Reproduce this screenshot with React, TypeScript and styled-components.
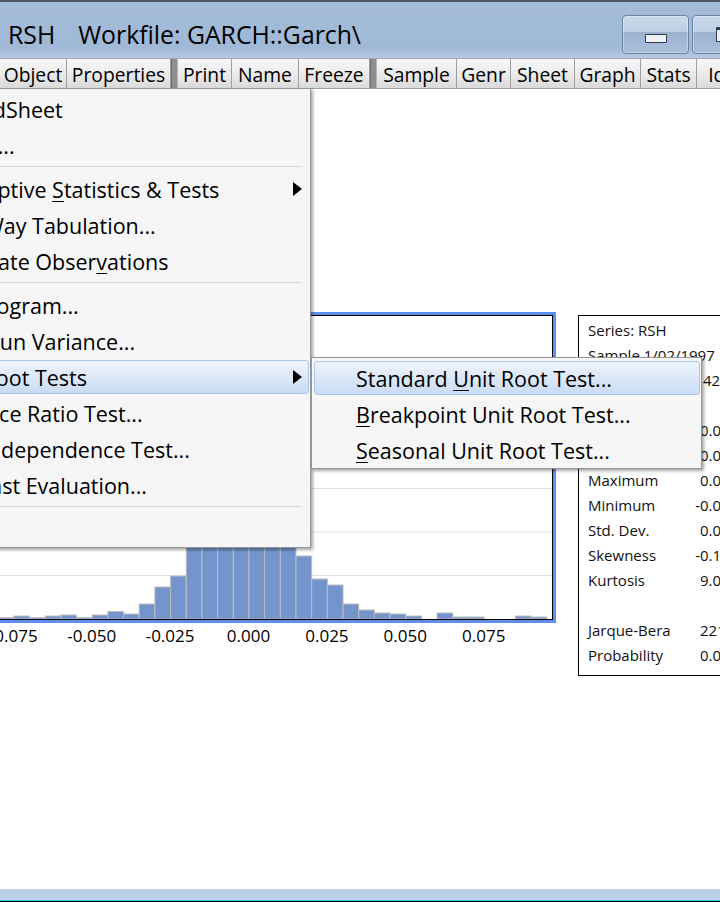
import React from "react";
import styled, { createGlobalStyle } from "styled-components";

const GlobalStyle = createGlobalStyle`
  html, body { margin: 0; padding: 0; overflow: hidden; background: #ffffff; }
  #root { width: 720px; height: 902px; overflow: hidden; position: relative; }
  *, *::before, *::after { box-sizing: border-box; }
`;

const Window = styled.div`
  position: relative;
  width: 880px;
  height: 902px;
  display: flex;
  flex-direction: column;
  font-family: "Open Sans", "Noto Sans", sans-serif;
  color: #000;
  border-bottom: 1px solid #000;
`;

const TitleBar = styled.div`
  height: 58px;
  flex: none;
  display: flex;
  align-items: flex-start;
  padding: 0 10px 0 8px;
  border-top: 2px solid #4e5764;
  background: linear-gradient(to bottom, #a4bcd8 0%, #a0b9d6 82%, #b4cae3 100%);
`;

const TitleText = styled.div`
  display: flex;
  gap: 23px;
  padding-top: 16px;
  font-size: 24.8px;
  line-height: 33px;
  white-space: nowrap;
  color: #000;
`;

const WindowButtons = styled.div`
  margin-left: auto;
  margin-top: 13px;
  display: flex;
  gap: 3px;
`;

const CaptionButton = styled.div<{ $w: number; $pad: number }>`
  width: ${(p) => p.$w}px;
  height: 39px;
  border: 1px solid #6b83a5;
  border-radius: 4px;
  background: linear-gradient(to bottom, #c9d9eb 0%, #bdd0e6 42%, #9bb1ce 43%, #a9bfda 100%);
  box-shadow: inset 0 0 0 1px rgba(255, 255, 255, 0.35);
  display: flex;
  justify-content: center;
  align-items: flex-start;
  padding-top: ${(p) => p.$pad}px;
`;

const MinGlyph = styled.div`
  width: 22px;
  height: 9px;
  background: #eef2f7;
  border: 1px solid #2f3b4b;
  border-radius: 1px;
`;

const MaxGlyph = styled.div`
  width: 20px;
  height: 15px;
  background: #eef2f7;
  border: 1px solid #2f3b4b;
  border-top-width: 3px;
  border-radius: 1px;
`;

const Toolbar = styled.div`
  height: 31px;
  flex: none;
  display: flex;
  border-top: 1px solid #a8a8a8;
  border-bottom: 1px solid #9c9c9c;
  background: linear-gradient(#f7f7f7, #d9d9d9);
`;

const ToolButton = styled.div<{ $w: number }>`
  width: ${(p) => p.$w}px;
  flex: none;
  display: flex;
  align-items: center;
  justify-content: center;
  padding-top: 1px;
  font-size: 19.3px;
  white-space: nowrap;
  border-right: 1px solid #9e9e9e;
  background: linear-gradient(to bottom, #f8f8f8 0%, #ececec 50%, #dadada 100%);
`;

const ToolSep = styled.div`
  width: 7px;
  flex: none;
  background: #8e8e8e;
  border-left: 1px solid #6f6f6f;
  border-right: 1px solid #b5b5b5;
`;

const Content = styled.div`
  flex: 1;
  background: #ffffff;
  display: flex;
  align-items: flex-start;
  padding-top: 223px;
`;

const BottomFrame = styled.div`
  height: 12px;
  flex: none;
  background: #bbd1ea;
  border-bottom: 1px solid #3fc6de;
`;

const ChartBlock = styled.div`
  margin-left: -100px;
  flex: none;
  display: flex;
  flex-direction: column;
`;

const PlotFrame = styled.div`
  width: 656px;
  height: 311px;
  border: 3px solid #5c8fee;
`;

const PlotInner = styled.div`
  width: 100%;
  height: 100%;
  border: 1px solid #000;
  background: #fff;
  display: flex;
`;

const StatsBox = styled.div`
  margin-left: 22px;
  margin-top: 3px;
  width: 220px;
  flex: none;
  border: 1px solid #000;
  padding: 1px 0 8px 9px;
  font-size: 15px;
  color: #111;
`;

const StatRow = styled.div`
  display: flex;
  height: 25px;
  align-items: center;
  white-space: nowrap;
`;

const StatLabel = styled.span`
  width: 100px;
  flex: none;
`;

const StatValue = styled.span<{ $left?: boolean }>`
  width: 76px;
  flex: none;
  text-align: ${(p) => (p.$left ? "left" : "right")};
  padding-left: ${(p) => (p.$left ? 15 : 0)}px;
`;

const Menu = styled.div<{ $left: number; $top: number; $width: number; $z: number }>`
  position: absolute;
  left: ${(p) => p.$left}px;
  top: ${(p) => p.$top}px;
  width: ${(p) => p.$width}px;
  z-index: ${(p) => p.$z};
  display: flex;
  flex-direction: column;
  padding: 2px 0 0;
  background: #f6f6f6;
  border: 1px solid #979797;
  box-shadow: 2px 2px 3px rgba(0, 0, 0, 0.35);
  font-size: 21.5px;
  color: #000;
`;

const MenuItem = styled.div<{ $active?: boolean }>`
  height: 34px;
  flex: none;
  margin: 1px 1px 1px 2px;
  padding: 0 6px 0 41px;
  display: flex;
  align-items: center;
  white-space: nowrap;
  border: 1px solid ${(p) => (p.$active ? "#a9c8ef" : "transparent")};
  border-radius: 3px;
  background: ${(p) =>
    p.$active ? "linear-gradient(to bottom, #eef4fd 0%, #dce8f8 50%, #c9dbf4 100%)" : "transparent"};
`;

const MenuSep = styled.div`
  height: 1px;
  flex: none;
  margin: 3px 9px 4px 2px;
  background: #d5d5d5;
`;

const SubArrow = styled.span`
  margin-left: auto;
  width: 0;
  height: 0;
  border-top: 7px solid transparent;
  border-bottom: 7px solid transparent;
  border-left: 9px solid #000;
`;

const Acc = styled.span`
  text-decoration: underline;
  text-underline-offset: 3px;
  text-decoration-thickness: 1px;
`;

const BIN = 15.68;
const HEIGHTS = [
  0, 1.5, 0, 1.5, 1.5, 2.5,
  1.5, 3, 1.5, 3, 4, 1.5, 4, 7.5, 5, 15, 32, 43, 72, 130, 190, 255, 240, 175, 110,
  63, 40, 34, 15, 9, 6, 5, 3, 0, 6, 2, 2, 0, 0, 3, 2,
];
const GRID = [259.5, 216, 172.5, 129, 85.5, 42];
const LABELS = [
  { t: "-0.100", x: -65.1 },
  { t: "-0.075", x: 13.3 },
  { t: "-0.050", x: 91.7 },
  { t: "-0.025", x: 170.1 },
  { t: "0.000", x: 248.5 },
  { t: "0.025", x: 326.9 },
  { t: "0.050", x: 405.3 },
  { t: "0.075", x: 483.7 },
];

const Histogram = () => (
  <svg width={648} height={303} viewBox="0 0 648 303">
    {GRID.map((y) => (
      <line key={y} x1={0} x2={648} y1={y} y2={y} stroke="#e2e2e2" strokeWidth={1} />
    ))}
    {HEIGHTS.map((h, i) =>
      h > 0 ? (
        <rect
          key={i}
          x={i * BIN}
          y={303 - h}
          width={BIN}
          height={h}
          fill="#7394cc"
          stroke="#bdbdbd"
          strokeWidth={1}
        />
      ) : null
    )}
  </svg>
);

const AxisLabels = () => (
  <svg width={656} height={28} viewBox="0 0 656 28">
    {LABELS.map((l) => (
      <text
        key={l.t}
        x={l.x + 100}
        y={18.5}
        textAnchor="middle"
        fontFamily='"Open Sans", "Noto Sans", sans-serif'
        fontSize={17}
        fill="#000"
      >
        {l.t}
      </text>
    ))}
  </svg>
);

const TOOLS: Array<{ t?: string; w: number; sep?: boolean }> = [
  { t: "Object", w: 67 },
  { t: "Properties", w: 104 },
  { sep: true, w: 7 },
  { t: "Print", w: 54 },
  { t: "Name", w: 67 },
  { t: "Freeze", w: 71 },
  { sep: true, w: 7 },
  { t: "Sample", w: 80 },
  { t: "Genr", w: 54 },
  { t: "Sheet", w: 64 },
  { t: "Graph", w: 66 },
  { t: "Stats", w: 56 },
  { t: "Ident", w: 70 },
];

export default function App() {
  return (
    <>
      <GlobalStyle />
      <Window>
        <TitleBar>
          <TitleText>
            <span>RSH</span>
            <span>Workfile: GARCH::Garch\</span>
          </TitleText>
          <WindowButtons>
            <CaptionButton $w={67} $pad={18}>
              <MinGlyph />
            </CaptionButton>
            <CaptionButton $w={67} $pad={11}>
              <MaxGlyph />
            </CaptionButton>
            <CaptionButton $w={108} $pad={11} />
          </WindowButtons>
        </TitleBar>

        <Toolbar>
          {TOOLS.map((b, i) =>
            b.sep ? <ToolSep key={i} /> : <ToolButton key={i} $w={b.w}>{b.t}</ToolButton>
          )}
        </Toolbar>

        <Content>
          <ChartBlock>
            <PlotFrame>
              <PlotInner>
                <Histogram />
              </PlotInner>
            </PlotFrame>
            <AxisLabels />
          </ChartBlock>
          <StatsBox>
            <StatRow>Series: RSH</StatRow>
            <StatRow>Sample 1/02/1997 12/31/2012</StatRow>
            <StatRow>
              <StatLabel>Observations</StatLabel>
              <StatValue $left>4218</StatValue>
            </StatRow>
            <StatRow />
            <StatRow>
              <StatLabel>Mean</StatLabel>
              <StatValue>0.000214</StatValue>
            </StatRow>
            <StatRow>
              <StatLabel>Median</StatLabel>
              <StatValue>0.000000</StatValue>
            </StatRow>
            <StatRow>
              <StatLabel>Maximum</StatLabel>
              <StatValue>0.095180</StatValue>
            </StatRow>
            <StatRow>
              <StatLabel>Minimum</StatLabel>
              <StatValue>-0.078512</StatValue>
            </StatRow>
            <StatRow>
              <StatLabel>Std. Dev.</StatLabel>
              <StatValue>0.013276</StatValue>
            </StatRow>
            <StatRow>
              <StatLabel>Skewness</StatLabel>
              <StatValue>-0.129481</StatValue>
            </StatRow>
            <StatRow>
              <StatLabel>Kurtosis</StatLabel>
              <StatValue>9.034567</StatValue>
            </StatRow>
            <StatRow />
            <StatRow>
              <StatLabel>Jarque-Bera</StatLabel>
              <StatValue>2213.456</StatValue>
            </StatRow>
            <StatRow>
              <StatLabel>Probability</StatLabel>
              <StatValue>0.000000</StatValue>
            </StatRow>
          </StatsBox>
        </Content>

        <BottomFrame />

        <Menu $left={-110} $top={88} $width={421} $z={5}>
          <MenuItem>SpreadSheet</MenuItem>
          <MenuItem>Graph...</MenuItem>
          <MenuSep />
          <MenuItem>
            <span>
              Descriptive <Acc>S</Acc>tatistics &amp; Tests
            </span>
            <SubArrow />
          </MenuItem>
          <MenuItem>One-Way Tabulation...</MenuItem>
          <MenuItem>
            <span>
              Duplicate Obser<Acc>v</Acc>ations
            </span>
          </MenuItem>
          <MenuSep />
          <MenuItem>Correlogram...</MenuItem>
          <MenuItem>Long-run Variance...</MenuItem>
          <MenuItem $active>
            <span>Unit Root Tests</span>
            <SubArrow />
          </MenuItem>
          <MenuItem>Variance Ratio Test...</MenuItem>
          <MenuItem>BDS Independence Test...</MenuItem>
          <MenuItem>Forecast Evaluation...</MenuItem>
          <MenuSep />
          <MenuItem>Label</MenuItem>
        </Menu>

        <Menu $left={311} $top={357} $width={391} $z={6}>
          <MenuItem $active>
            <span>
              Standard <Acc>U</Acc>nit Root Test...
            </span>
          </MenuItem>
          <MenuItem>
            <span>
              <Acc>B</Acc>reakpoint Unit Root Test...
            </span>
          </MenuItem>
          <MenuItem>
            <span>
              <Acc>S</Acc>easonal Unit Root Test...
            </span>
          </MenuItem>
        </Menu>
      </Window>
    </>
  );
}
